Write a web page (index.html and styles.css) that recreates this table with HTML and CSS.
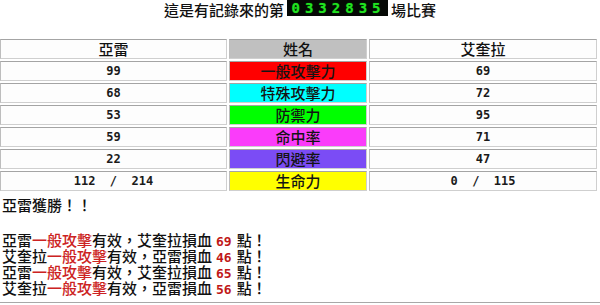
FILE: index.html
```html
<!DOCTYPE html>
<html lang="zh-Hant">
<head>
<meta charset="utf-8">
<title>比賽</title>
<link rel="stylesheet" href="styles.css">
</head>
<body>
<div class="title">這是有記錄來的第 <span class="counter">0332835</span> 場比賽</div>
<div class="board">
  <div class="cell head">亞雷</div>
  <div class="cell head gray">姓名</div>
  <div class="cell head">艾奎拉</div>

  <div class="cell num">99</div>
  <div class="cell label red">一般攻擊力</div>
  <div class="cell num">69</div>

  <div class="cell num">68</div>
  <div class="cell label cyan">特殊攻擊力</div>
  <div class="cell num">72</div>

  <div class="cell num">53</div>
  <div class="cell label green">防禦力</div>
  <div class="cell num">95</div>

  <div class="cell num">59</div>
  <div class="cell label magenta">命中率</div>
  <div class="cell num">71</div>

  <div class="cell num">22</div>
  <div class="cell label purple">閃避率</div>
  <div class="cell num">47</div>

  <div class="cell num">112&nbsp;&nbsp;/&nbsp;&nbsp;214</div>
  <div class="cell label yellow">生命力</div>
  <div class="cell num">0&nbsp;&nbsp;/&nbsp;&nbsp;115</div>
</div>
<div class="win">亞雷獲勝！！</div>
<div class="log">
  <div class="line">亞雷<span class="atk">一般攻擊</span>有效，艾奎拉損血<span class="dmg">69</span>點！</div>
  <div class="line">艾奎拉<span class="atk">一般攻擊</span>有效，亞雷損血<span class="dmg">46</span>點！</div>
  <div class="line">亞雷<span class="atk">一般攻擊</span>有效，艾奎拉損血<span class="dmg">65</span>點！</div>
  <div class="line">艾奎拉<span class="atk">一般攻擊</span>有效，亞雷損血<span class="dmg">56</span>點！</div>
</div>
<div class="rule"></div>
</body>
</html>
```
FILE: styles.css
```css
html, body {
  margin: 0;
  padding: 0;
  background: #ffffff;
}
body {
  font-family: "Noto Sans CJK TC", "Noto Sans CJK SC", sans-serif;
  font-size: 15px;
  font-weight: 500;
  color: #111111;
  width: 600px;
  overflow: hidden;
}
.title {
  height: 20px;
  line-height: 20px;
  text-align: center;
  white-space: nowrap;
}
.counter {
  display: inline-block;
  vertical-align: top;
  height: 16px;
  line-height: 16px;
  padding: 0 2px 0 4px;
  background: #050805;
  color: #22e022;
  font-family: "DejaVu Sans Mono", monospace;
  font-weight: bold;
  font-size: 14px;
  letter-spacing: 5px;
  text-shadow: 0 0 1px #0a0;
}
.board {
  margin-top: 19px;
  display: grid;
  grid-template-columns: 227px 138px 228px;
  grid-auto-rows: 20px;
  gap: 2px;
}
.cell {
  box-sizing: border-box;
  border-top: 1px solid #a4a4a4;
  border-left: 1px solid #bdbdbd;
  border-bottom: 1px solid #cfcfcf;
  border-right: 1px solid #cfcfcf;
  display: flex;
  align-items: center;
  justify-content: center;
  white-space: nowrap;
  background: #fdfdfd;
}
.head {
  font-size: 15px;
  line-height: 18px;
}
.label {
  font-size: 15px;
  line-height: 18px;
  color: #141414;
}
.num {
  font-family: "DejaVu Sans Mono", monospace;
  font-weight: bold;
  font-size: 12px;
  color: #1a1a1a;
}
.gray { background: #c0c0c0; }
.red { background: #ff0000; }
.cyan { background: #00ffff; }
.green { background: #00ff00; }
.magenta { background: #fa3cfa; }
.purple { background: #7b4cf5; }
.yellow { background: #ffff00; }
.win {
  margin-top: 6px;
  padding-left: 2px;
  line-height: 16px;
  height: 16px;
}
.log {
  margin-top: 19px;
  padding-left: 2px;
}
.line {
  line-height: 16px;
  height: 16px;
  white-space: nowrap;
}
.atk {
  color: #cc2222;
}
.dmg {
  color: #c01818;
  font-family: "DejaVu Sans Mono", monospace;
  font-weight: bold;
  font-size: 13px;
  margin: 0 5px 0 4px;
}
.rule {
  margin-top: 6px;
  border-top: 1px solid #a8a8a8;
}
```
